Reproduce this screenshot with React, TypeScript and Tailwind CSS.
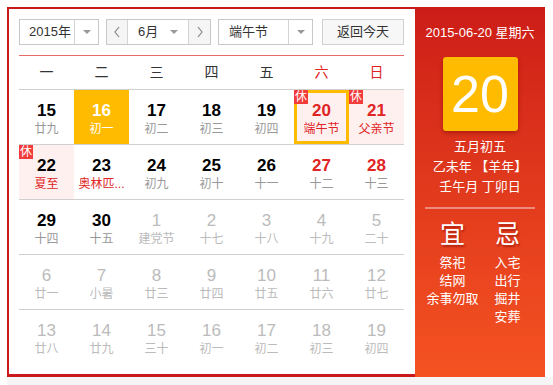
import React from "react";

type Day = {
  n: number;
  l: string;
  other?: boolean;
  redNum?: boolean;
  redLunar?: boolean;
  rest?: boolean;
  pink?: boolean;
  selected?: boolean;
  today?: boolean;
};

const rows: Day[][] = [
  [
    { n: 15, l: "廿九" },
    { n: 16, l: "初一", today: true },
    { n: 17, l: "初二" },
    { n: 18, l: "初三" },
    { n: 19, l: "初四" },
    { n: 20, l: "端午节", redNum: true, redLunar: true, rest: true, pink: true, selected: true },
    { n: 21, l: "父亲节", redNum: true, redLunar: true, rest: true, pink: true },
  ],
  [
    { n: 22, l: "夏至", redLunar: true, rest: true, pink: true },
    { n: 23, l: "奥林匹...", redLunar: true },
    { n: 24, l: "初九" },
    { n: 25, l: "初十" },
    { n: 26, l: "十一" },
    { n: 27, l: "十二", redNum: true },
    { n: 28, l: "十三", redNum: true },
  ],
  [
    { n: 29, l: "十四" },
    { n: 30, l: "十五" },
    { n: 1, l: "建党节", other: true },
    { n: 2, l: "十七", other: true },
    { n: 3, l: "十八", other: true },
    { n: 4, l: "十九", other: true },
    { n: 5, l: "二十", other: true },
  ],
  [
    { n: 6, l: "廿一", other: true },
    { n: 7, l: "小暑", other: true },
    { n: 8, l: "廿三", other: true },
    { n: 9, l: "廿四", other: true },
    { n: 10, l: "廿五", other: true },
    { n: 11, l: "廿六", other: true },
    { n: 12, l: "廿七", other: true },
  ],
  [
    { n: 13, l: "廿八", other: true },
    { n: 14, l: "廿九", other: true },
    { n: 15, l: "三十", other: true },
    { n: 16, l: "初一", other: true },
    { n: 17, l: "初二", other: true },
    { n: 18, l: "初三", other: true },
    { n: 19, l: "初四", other: true },
  ],
];

const weekdays = ["一", "二", "三", "四", "五", "六", "日"];

function Caret() {
  return <span className="w-0 h-0 border-l-[4px] border-r-[4px] border-t-[4px] border-l-transparent border-r-transparent border-t-[#999]" />;
}

function Chevron({ dir }: { dir: "l" | "r" }) {
  return (
    <svg width="8" height="12" viewBox="0 0 8 12">
      <polyline
        points={dir === "l" ? "6,1 2,6 6,11" : "2,1 6,6 2,11"}
        fill="none"
        stroke="#888"
        strokeWidth="1.2"
      />
    </svg>
  );
}

function Cell({ d }: { d: Day }) {
  let bg = "bg-white";
  if (d.today) bg = "bg-[#ffbb00]";
  else if (d.pink) bg = "bg-[#fff0f0]";

  let numColor = "text-black font-bold";
  if (d.other) numColor = "text-[#bbb] font-normal";
  else if (d.today) numColor = "text-white font-bold";
  else if (d.redNum) numColor = "text-[#e02424] font-bold";

  let lunarColor = "text-[#999]";
  if (d.other) lunarColor = "text-[#bbb]";
  else if (d.today) lunarColor = "text-white";
  else if (d.redLunar) lunarColor = "text-[#e02424]";

  return (
    <div
      className={`relative h-[54px] flex flex-col items-center ${bg} ${
        d.selected ? "border-[3px] border-[#ffbb00] pt-[8px]" : "pt-[11px]"
      }`}
    >
      {d.rest && (
        <span
          className={`absolute ${d.selected ? "-left-[3px] -top-[3px]" : "left-0 top-0"} w-[14px] h-[14px] bg-[#f23b3b] text-white text-[12px] leading-[14px] text-center`}
        >
          休
        </span>
      )}
      <span className={`text-[17px] leading-[20px] ${numColor}`}>{d.n}</span>
      <span className={`text-[12px] leading-[16px] whitespace-nowrap ${lunarColor}`}>{d.l}</span>
    </div>
  );
}

export default function App() {
  return (
    <div
      className="w-[553px] h-[385px] bg-white pt-[7px]"
      style={{ fontFamily: '"Liberation Sans", "Noto Sans CJK SC", sans-serif' }}
    >
      <div className="ml-[7px] flex h-[370px]">
        {/* left: calendar */}
        <div className="w-[408px] border-t-2 border-l-2 border-b-[3px] border-[#c9191c] pt-[10px] pl-[10px] pr-[11px]">
          <div className="flex items-center h-[26px] text-[13px] text-[#333]">
            <div className="flex h-full w-[80px] border border-[#c8c8c8] bg-white">
              <div className="flex-1 flex items-center pl-[9px]">2015年</div>
              <div className="w-[24px] border-l border-[#d4d4d4] flex items-center justify-center">
                <Caret />
              </div>
            </div>
            <div className="flex h-full w-[105px] ml-[7px] border border-[#c8c8c8]">
              <div className="w-[21px] bg-[#f5f5f5] border-r border-[#d4d4d4] flex items-center justify-center">
                <Chevron dir="l" />
              </div>
              <div className="flex-1 flex items-center justify-between pl-[10px] pr-[10px] bg-white">
                <span>6月</span>
                <Caret />
              </div>
              <div className="w-[22px] bg-[#f5f5f5] border-l border-[#d4d4d4] flex items-center justify-center">
                <Chevron dir="r" />
              </div>
            </div>
            <div className="flex h-full w-[95px] ml-[7px] border border-[#c8c8c8] bg-white">
              <div className="flex-1 flex items-center pl-[10px]">端午节</div>
              <div className="w-[24px] border-l border-[#d4d4d4] flex items-center justify-center">
                <Caret />
              </div>
            </div>
            <div className="flex h-full w-[82px] ml-[9px] border border-[#d0d0d0] bg-[#f7f7f7] items-center justify-center">
              返回今天
            </div>
          </div>

          <div className="mt-[10px] border-t border-[#e86a66]" />

          <div className="grid grid-cols-7 h-[34px] border-b border-[#d0d0d0] items-center text-[14px]">
            {weekdays.map((w, i) => (
              <div key={w} className={`text-center ${i >= 5 ? "text-[#e02424]" : "text-[#333]"}`}>
                {w}
              </div>
            ))}
          </div>

          {rows.map((r, ri) => (
            <div
              key={ri}
              className={`grid grid-cols-7 ${ri < rows.length - 1 ? "border-b border-[#d0d0d0]" : ""}`}
            >
              {r.map((d, di) => (
                <Cell key={di} d={d} />
              ))}
            </div>
          ))}
        </div>

        {/* right: detail panel */}
        <div className="w-[130px] bg-gradient-to-b from-[#cd1c18] to-[#f55222] text-white flex flex-col items-center">
          <div className="mt-[17px] text-[13px] leading-[18px]">2015-06-20 星期六</div>
          <div className="mt-[15px] w-[75px] h-[74px] rounded-[3px] bg-[#ffbb00] shadow-[0_2px_4px_rgba(120,0,0,0.45)] flex items-center justify-center text-[52px] leading-none">
            20
          </div>
          <div className="mt-[6px] text-[13px] leading-[20px] text-center">
            <div>五月初五</div>
            <div>乙未年 【羊年】</div>
            <div>壬午月 丁卯日</div>
          </div>
          <div className="mt-[10px] w-[110px] h-[2px] bg-[#f08a80]" />
          <div className="mt-[10px] w-[110px] grid grid-cols-2 text-center">
            <div className="flex flex-col items-center">
              <div className="text-[25px] leading-[30px] [text-shadow:1px_2px_2px_rgba(120,0,0,0.5)]">宜</div>
              <div className="mt-[5px] text-[13px] leading-[18px] whitespace-nowrap">
                <div>祭祀</div>
                <div>结网</div>
                <div>余事勿取</div>
              </div>
            </div>
            <div className="flex flex-col items-center">
              <div className="text-[25px] leading-[30px] [text-shadow:1px_2px_2px_rgba(120,0,0,0.5)]">忌</div>
              <div className="mt-[5px] text-[13px] leading-[18px] whitespace-nowrap">
                <div>入宅</div>
                <div>出行</div>
                <div>掘井</div>
                <div>安葬</div>
              </div>
            </div>
          </div>
        </div>
      </div>
      <div className="ml-[7px] h-[8px] bg-[#f5f5f5]" />
    </div>
  );
}
